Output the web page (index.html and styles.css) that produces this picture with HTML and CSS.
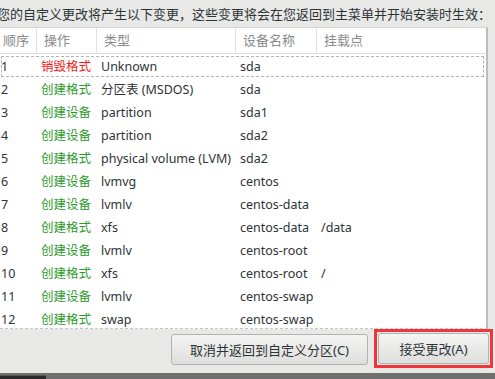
FILE: index.html
```html
<!DOCTYPE html>
<html lang="zh-CN">
<head>
  <meta charset="UTF-8">
  <title>变更摘要</title>
  <link rel="stylesheet" href="styles.css">
</head>
<body>
  <div class="dialog">
    <div class="intro">您的自定义更改将产生以下变更，这些变更将会在您返回到主菜单并开始安装时生效：</div>
    <div class="list">
      <div class="row head">
        <div>顺序</div><div>操作</div><div>类型</div><div>设备名称</div><div>挂载点</div>
      </div>
      <div class="row focus"><div>1</div><div class="destroy">销毁格式</div><div>Unknown</div><div>sda</div><div></div></div>
      <div class="row"><div>2</div><div class="create">创建格式</div><div>分区表 (MSDOS)</div><div>sda</div><div></div></div>
      <div class="row"><div>3</div><div class="create">创建设备</div><div>partition</div><div>sda1</div><div></div></div>
      <div class="row"><div>4</div><div class="create">创建设备</div><div>partition</div><div>sda2</div><div></div></div>
      <div class="row"><div>5</div><div class="create">创建格式</div><div>physical volume (LVM)</div><div>sda2</div><div></div></div>
      <div class="row"><div>6</div><div class="create">创建设备</div><div>lvmvg</div><div>centos</div><div></div></div>
      <div class="row"><div>7</div><div class="create">创建设备</div><div>lvmlv</div><div>centos-data</div><div></div></div>
      <div class="row"><div>8</div><div class="create">创建格式</div><div>xfs</div><div>centos-data</div><div>/data</div></div>
      <div class="row"><div>9</div><div class="create">创建设备</div><div>lvmlv</div><div>centos-root</div><div></div></div>
      <div class="row"><div>10</div><div class="create">创建格式</div><div>xfs</div><div>centos-root</div><div>/</div></div>
      <div class="row"><div>11</div><div class="create">创建设备</div><div>lvmlv</div><div>centos-swap</div><div></div></div>
      <div class="row"><div>12</div><div class="create">创建格式</div><div>swap</div><div>centos-swap</div><div></div></div>
    </div>
    <div class="actions">
      <button class="btn cancel">取消并返回到自定义分区(C)</button>
      <span class="mark"><button class="btn accept">接受更改(A)</button></span>
    </div>
  </div>
  <div class="taskbar"><div class="task"></div></div>
</body>
</html>
```

FILE: styles.css
```css
body {
  margin: 0;
  width: 495px;
  height: 379px;
  overflow: hidden;
  background: #e8e8e7;
  font-family: "Noto Sans", "Noto Sans CJK SC", sans-serif;
  font-size: 13px;
  color: #2e3436;
}
.dialog {
  height: 373px;
  display: flex;
  flex-direction: column;
}
.intro {
  height: 27px;
  line-height: 28px;
  margin-left: -3px;
  white-space: nowrap;
  overflow: hidden;
}
.list {
  width: 486px;
  height: 300px;
  background: #fff;
  border-top: 1px solid #d6d6d6;
  border-right: 2px solid #bcbcbc;
  border-bottom: 1px dashed #c4c4c4;
  overflow: hidden;
  font-size: 12.5px;
}
.row {
  display: grid;
  grid-template-columns: 36px 60px 139px 81px 1fr;
  height: 23px;
  line-height: 23px;
  white-space: nowrap;
}
.row div { padding-left: 5px; overflow: hidden; }
.row div:first-child { padding-left: 1px; }
.head {
  height: 25px;
  line-height: 25px;
  border-bottom: 1px solid #dcdcdc;
  margin-bottom: 1px;
  color: #8a8a8a;
  font-size: 13px;
}
.head div { padding-left: 7px; border-left: 1px solid #e2e2e2; }
.head div:first-child { padding-left: 3px; border-left: none; }
.focus {
  box-sizing: border-box;
  width: 485px;
  outline: 1px dashed #b4b4b4;
  outline-offset: -2px;
}
.destroy { color: #f21a1a; }
.create { color: #2c9a2c; }
.actions {
  flex: 1;
  display: flex;
  justify-content: flex-end;
  align-items: flex-start;
  padding: 0 2px 0 0;
}
.btn {
  height: 31px;
  padding: 0;
  font-family: inherit;
  font-size: 13px;
  color: #2e3436;
  background: linear-gradient(#f4f4f3, #dededd);
  border: 1px solid #b2b2b1;
  border-radius: 3px;
}
.cancel { width: 197px; margin: 5px 6px 0 0; }
.mark {
  display: flex;
  padding: 1px;
  border: 3px solid #f0343a;
}
.accept { width: 111px; }
.taskbar {
  height: 6px;
  background: #6f6f6f;
  display: flex;
  align-items: flex-end;
}
.task {
  width: 46px;
  height: 3px;
  background: #2a2a2a;
  border-top: 1px solid #555;
}
```
